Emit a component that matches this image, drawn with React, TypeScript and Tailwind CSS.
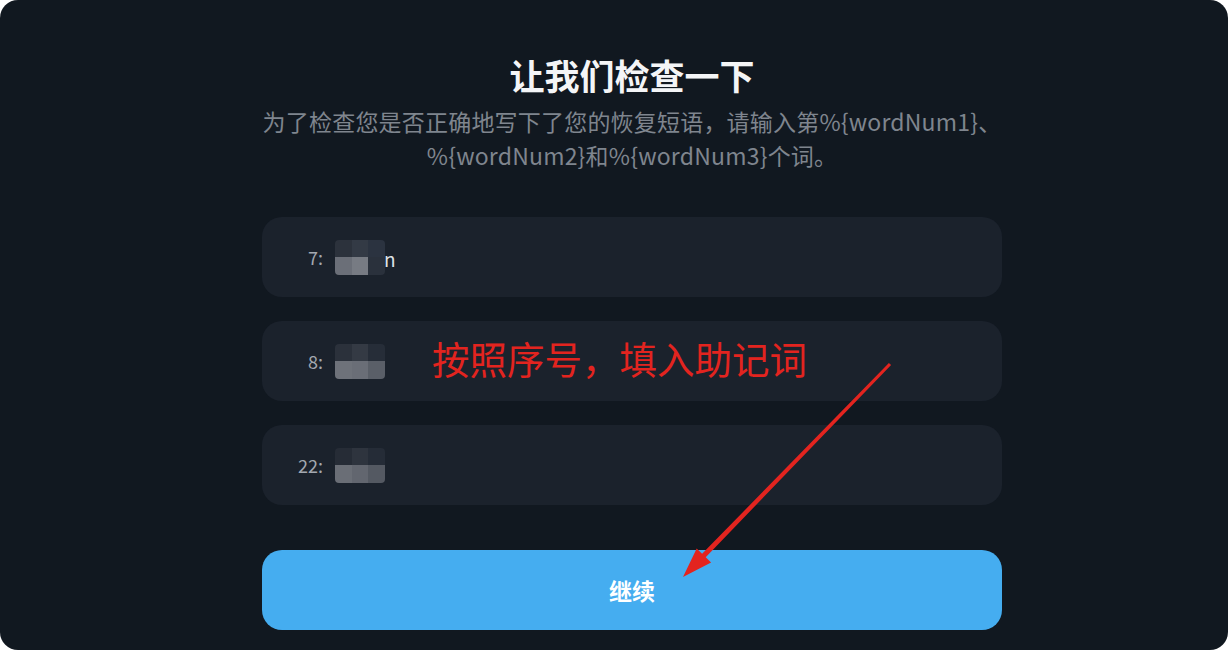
import React from "react";

type Cell = string;

function Mosaic({ top, bottom }: { top: Cell[]; bottom: Cell[] }) {
  return (
    <div className="flex flex-col w-[50px] h-[35px] rounded-[4px] overflow-hidden">
      <div className="flex h-1/2">
        {top.map((c, i) => (
          <div key={i} className="flex-1" style={{ background: c }} />
        ))}
      </div>
      <div className="flex h-1/2">
        {bottom.map((c, i) => (
          <div key={i} className="flex-1" style={{ background: c }} />
        ))}
      </div>
    </div>
  );
}

function Field({
  label,
  top,
  bottom,
  tail,
}: {
  label: string;
  top: Cell[];
  bottom: Cell[];
  tail?: string;
}) {
  return (
    <div className="w-[740px] h-[80px] rounded-[20px] bg-[#1b222c] flex items-center pl-[26px]">
      <span className="w-[36px] text-right text-[18px] text-[#a3a8b0] pr-[1px]">{label}</span>
      <div className="ml-[11px] flex items-center">
        <Mosaic top={top} bottom={bottom} />
        {tail && <span className="text-[19px] text-[#dfe2e6] -ml-[1px] leading-none mt-[2px]">{tail}</span>}
      </div>
    </div>
  );
}

export default function App() {
  return (
    <div className="w-[1228px] h-[650px] bg-white" style={{ fontFamily: '"Noto Sans CJK SC", "Noto Sans", sans-serif' }}>
      <div className="relative w-full h-full rounded-[18px] bg-[#111820] flex flex-col items-center pt-[55px] pl-[36px] overflow-hidden">
        <h1 className="text-[35px] leading-[40px] font-bold text-[#f4f5f7]">让我们检查一下</h1>
        <p className="mt-[9px] text-[23px] leading-[34px] text-[#7f858e] text-center tracking-[0.2px]">
          为了检查您是否正确地写下了您的恢复短语，请输入第%{"{"}wordNum1{"}"}、
          <br />
          %{"{"}wordNum2{"}"}和%{"{"}wordNum3{"}"}个词。
        </p>
        <div className="mt-[45px] flex flex-col gap-[24px]">
          <Field label="7:" top={["#2c323c", "#333a45", "#2b3340"]} bottom={["#6b6f78", "#777b83", "#2a313c"]} tail="n" />
          <Field label="8:" top={["#2b313b", "#343a44", "#262d38"]} bottom={["#6e727a", "#6a6e77", "#5a5f68"]} />
          <Field label="22:" top={["#262c36", "#2e343e", "#252c37"]} bottom={["#6a6e76", "#62666f", "#545962"]} />
        </div>
        <button className="mt-[45px] w-[740px] h-[80px] rounded-[20px] bg-[#45adf0] text-white text-[23px] font-bold flex items-center justify-center">
          继续
        </button>

        <div className="absolute left-[432px] top-[334px] text-[37.5px] leading-[48px] text-[#e3241f]">
          按照序号，填入助记词
        </div>
        <svg className="absolute left-0 top-0" width="1228" height="650" viewBox="0 0 1228 650">
          <polygon
            points="891.1,365 888.9,363 702.1,553.8 696.7,548.5 683,577 711.1,562.5 705.7,557.2"
            fill="#e3241f"
          />
        </svg>
      </div>
    </div>
  );
}
